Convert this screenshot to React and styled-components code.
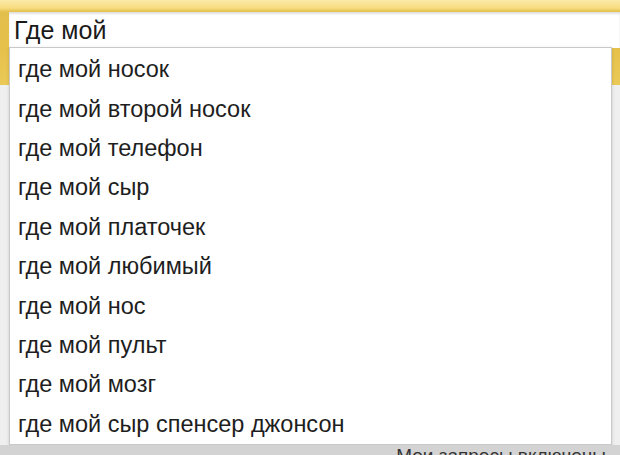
import React from "react";
import styled, { createGlobalStyle } from "styled-components";

const GlobalStyle = createGlobalStyle`
  html, body {
    margin: 0;
    padding: 0;
  }
  body {
    width: 620px;
    height: 455px;
    overflow: hidden;
    background: #efefef;
    font-family: "Liberation Sans", Arial, sans-serif;
  }
`;

const Page = styled.div`
  position: relative;
  width: 620px;
  height: 455px;
  overflow: hidden;
`;

const Frame = styled.div`
  height: 85px;
  box-sizing: border-box;
  padding: 12px 0 0 9px;
  background: linear-gradient(
    to bottom,
    #fbeaa8 0px,
    #f7dc80 8px,
    #e2be4a 12px,
    #e6c24c 60%,
    #ebc957 100%
  );
`;

const Input = styled.div`
  height: 36px;
  background: #ffffff;
  box-shadow: inset 0 2px 2px rgba(0, 0, 0, 0.12);
  padding: 3px 0 0 5px;
  box-sizing: border-box;
  font-size: 25px;
  line-height: 30px;
  color: #1a1a1a;
`;

const Popup = styled.div`
  position: absolute;
  top: 47px;
  left: 0;
  right: 0;
  bottom: 0;
  display: flex;
  flex-direction: column;
`;

const List = styled.ul`
  list-style: none;
  margin: 0 8px 0 9px;
  padding: 2px 0 0;
  background: #ffffff;
  border: 1px solid #c9c9c9;
  box-shadow: 0 1px 3px rgba(0, 0, 0, 0.15);
`;

const Item = styled.li`
  height: 39.4px;
  display: flex;
  align-items: center;
  padding-left: 8px;
  font-size: 23.5px;
  color: #1e1e1e;
  white-space: nowrap;
`;

const Footer = styled.div`
  flex: 1;
  background: #d3d3d3;
  display: flex;
  justify-content: flex-end;
  padding: 0 14px 0 0;
  font-size: 19px;
  line-height: 20px;
  color: #333;
  overflow: hidden;
`;

const FooterText = styled.span`
  margin-top: 1px;
`;

const suggestions = [
  "где мой носок",
  "где мой второй носок",
  "где мой телефон",
  "где мой сыр",
  "где мой платочек",
  "где мой любимый",
  "где мой нос",
  "где мой пульт",
  "где мой мозг",
  "где мой сыр спенсер джонсон"
];

const App = () => (
  <Page>
    <GlobalStyle />
    <Frame>
      <Input>Где мой</Input>
    </Frame>
    <Popup>
      <List>
        {suggestions.map(text => (
          <Item key={text}>{text}</Item>
        ))}
      </List>
      <Footer>
        <FooterText>Мои запросы включены</FooterText>
      </Footer>
    </Popup>
  </Page>
);

export default App;
